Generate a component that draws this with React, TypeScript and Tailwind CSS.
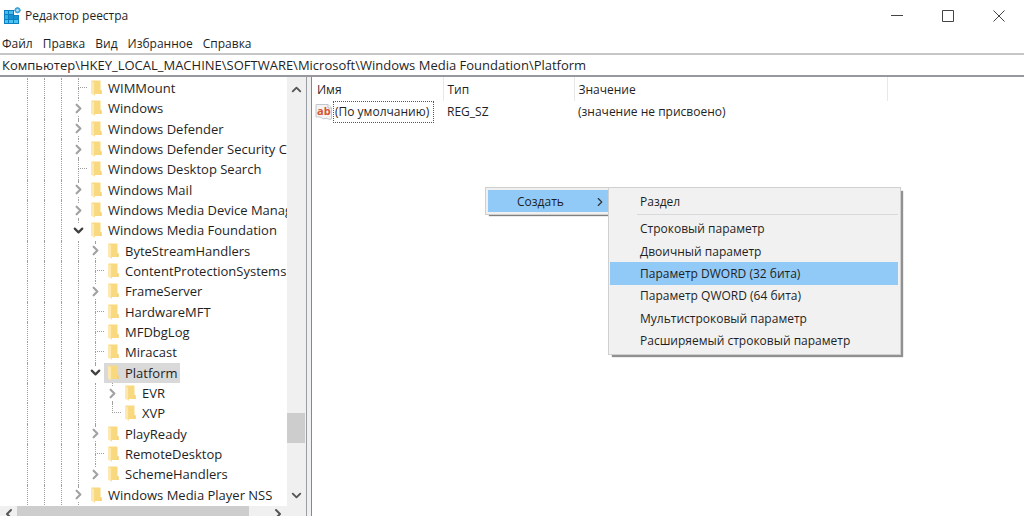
import { ChevronDown, ChevronLeft, ChevronRight, ChevronUp } from 'lucide-react'
import clsx from 'clsx'

type Node = {
  name: string
  level: 0 | 1 | 2
  state?: 'open' | 'closed'
  last?: boolean
  selected?: boolean
}

const TREE: Node[] = [
  { name: 'WIMMount', level: 0 },
  { name: 'Windows', level: 0, state: 'closed' },
  { name: 'Windows Defender', level: 0, state: 'closed' },
  { name: 'Windows Defender Security Center', level: 0, state: 'closed' },
  { name: 'Windows Desktop Search', level: 0 },
  { name: 'Windows Mail', level: 0, state: 'closed' },
  { name: 'Windows Media Device Manager', level: 0, state: 'closed' },
  { name: 'Windows Media Foundation', level: 0, state: 'open' },
  { name: 'ByteStreamHandlers', level: 1, state: 'closed' },
  { name: 'ContentProtectionSystems', level: 1 },
  { name: 'FrameServer', level: 1, state: 'closed' },
  { name: 'HardwareMFT', level: 1 },
  { name: 'MFDbgLog', level: 1 },
  { name: 'Miracast', level: 1 },
  { name: 'Platform', level: 1, state: 'open', selected: true },
  { name: 'EVR', level: 2, state: 'closed' },
  { name: 'XVP', level: 2, last: true },
  { name: 'PlayReady', level: 1, state: 'closed' },
  { name: 'RemoteDesktop', level: 1 },
  { name: 'SchemeHandlers', level: 1, state: 'closed', last: true },
  { name: 'Windows Media Player NSS', level: 0, state: 'closed' },
]

const MENU = ['Файл', 'Правка', 'Вид', 'Избранное', 'Справка']

const NEW_ITEMS = [
  'Строковый параметр',
  'Двоичный параметр',
  'Параметр DWORD (32 бита)',
  'Параметр QWORD (64 бита)',
  'Мультистроковый параметр',
  'Расширяемый строковый параметр',
]

function RegeditIcon() {
  return (
    <svg viewBox="0 0 18 18" className="size-[18px]" aria-hidden="true">
      <path d="M1 3h10v5h5v9H1z" fill="#0b7fc0" />
      <path d="M2 4h3v3H2zM6 4h4v3H6z" fill="#46bdea" />
      <path d="M2 8h3v4H2z" fill="#35b0e4" />
      <path d="M6 8h4v4H6zM11 9h4v3h-4z" fill="#1592d2" />
      <path d="M2 13h3v3H2zM6 13h4v3H6zM11 13h4v3h-4z" fill="#4cc3f0" />
      <path d="M14.500 0l2.300 1 1 2.200-1 2.300-2.300 1-2.300-1-1-2.300 1-2.200z" fill="#3fa3dc" />
      <circle cx="14.500" cy="3.200" r="1.300" fill="#b9e2f7" />
    </svg>
  )
}

function FolderIcon() {
  return (
    <svg viewBox="0 0 11 16" className="h-4 w-[11px] shrink-0" aria-hidden="true">
      <path d="M.5.5h9V10l1 .5V14h-10z" fill="#f9d97f" />
      <path d="M9.500 10l1 .5V14h-1z" fill="#f5cc68" />
      <path d="M0 .8l3.500 1.700v13L0 13.800z" fill="#fde9ae" />
      <path d="M3.500 2.500v13" stroke="#f7d47c" strokeWidth=".6" />
    </svg>
  )
}

function StringIcon() {
  return (
    <svg viewBox="0 0 18 18" className="size-[18px] shrink-0" aria-hidden="true">
      <path
        d="M1 1.500h12l3.500 3.500v11c-2 1.500-4-1.500-6.500-.5s-3-1-5-1.500-3 .5-4 0z"
        fill="#f4f4f4"
        stroke="#c3c6ca"
      />
      <path d="M13 1.500V5h3.500" fill="#fff" stroke="#b9bcc0" />
      <text
        x="2"
        y="12"
        fontSize="11"
        fontWeight="700"
        fill="#d8532c"
        fontFamily="'Open Sans', sans-serif"
      >
        ab
      </text>
    </svg>
  )
}

function TreeRow({ node }: { node: Node }) {
  const guides = Array.from({ length: 3 + node.level })
  return (
    <li className="flex min-h-5 flex-1 items-stretch">
      {guides.map((_, i) => (
        <span key={i} className="flex w-[17px] shrink-0 justify-center">
          <span className="border-l border-dotted border-[#a0a0a0]" />
        </span>
      ))}
      <span className="flex w-[17px] shrink-0 flex-col items-center">
        {node.state ? (
          <>
            <span className="h-[3px] border-l border-dotted border-[#a0a0a0]" />
            <button
              aria-label={node.name}
              aria-expanded={node.state === 'open'}
              className="flex flex-1 items-center"
            >
              {node.state === 'open' ? (
                <ChevronDown size={15} strokeWidth={3.5} className="text-[#404040]" />
              ) : (
                <ChevronRight size={15} strokeWidth={3.5} className="text-[#a2a2a2]" />
              )}
            </button>
            {/* the last child of a branch leaves no line under it */}
            <span
              className={clsx(
                'h-[3px] border-dotted border-[#a0a0a0]',
                !node.last && node.state === 'closed' && 'border-l',
              )}
            />
          </>
        ) : (
          <>
            <span className="flex w-full flex-1 justify-end">
              <span className="w-[9px] border-b border-l border-dotted border-[#a0a0a0]" />
            </span>
            <span className="flex w-full flex-1 justify-end">
              <span
                className={clsx('w-[9px] border-dotted border-[#a0a0a0]', !node.last && 'border-l')}
              />
            </span>
          </>
        )}
      </span>
      <span
        className={clsx(
          'flex items-center gap-1.5 pl-1 pr-[2px] whitespace-nowrap',
          node.selected && 'bg-[#d9d9d9]',
        )}
      >
        <FolderIcon />
        {node.name}
      </span>
    </li>
  )
}

function TreePane() {
  return (
    <aside className="flex w-[307px] shrink-0 flex-col overflow-hidden border-r border-[#9a9da3] text-[13px]">
      <div className="flex min-h-0 flex-1">
        <ul className="flex min-w-0 flex-1 flex-col overflow-hidden py-px pl-[19px]">
          {TREE.map((node) => (
            <TreeRow key={node.name} node={node} />
          ))}
        </ul>
        <div className="flex w-[19px] flex-col items-center bg-[#f0f0f0] pr-px">
          <button aria-label="Вверх" className="flex h-6 items-center">
            <ChevronUp size={15} strokeWidth={3} className="text-[#555]" />
          </button>
          <div className="flex-[312]" />
          <div className="w-full flex-[30] bg-[#cdcdcd]" />
          <div className="flex-[41]" />
          <button aria-label="Вниз" className="flex h-[22px] items-center">
            <ChevronDown size={15} strokeWidth={3} className="text-[#555]" />
          </button>
        </div>
      </div>
      <div className="flex h-[10px] items-start overflow-hidden bg-[#f0f0f0]">
        <button aria-label="Влево" className="flex w-[17px] justify-center">
          <ChevronLeft size={16} strokeWidth={3} className="text-[#555]" />
        </button>
        <div className="h-full w-[232px] bg-[#cdcdcd]" />
        <div className="flex-1" />
        <button aria-label="Вправо" className="mr-5 flex w-[17px] justify-center">
          <ChevronRight size={16} strokeWidth={3} className="text-[#555]" />
        </button>
      </div>
    </aside>
  )
}

function ContextMenu() {
  return (
    <div className="absolute top-[110px] left-[173px] flex items-start">
      <div className="w-[123px] border border-r-0 border-[#d0d0d0] bg-[#f0f0f0] p-[2px] pr-0 shadow-[3px_2px_1px_-1px_#808080]">
        <button className="flex h-[22px] w-full items-center justify-between bg-[#91c9f7] pt-px pr-px pl-[29px]">
          Создать
          <ChevronRight size={14} strokeWidth={2} className="text-[#333]" />
        </button>
      </div>
      <div
        role="menu"
        className="relative flex h-[168px] w-[293px] flex-col border border-[#d0d0d0] bg-[#f1f1f1] py-[2px] pr-[2px] pl-px shadow-[3px_3px_1px_-1px_#909090]"
      >
        <button role="menuitem" className="flex flex-1 items-center pt-px pl-[30px]">
          Раздел
        </button>
        <div className="flex h-[5px] items-center pl-[27px]">
          <hr className="flex-1 border-[#d9d9d9]" />
        </div>
        {NEW_ITEMS.map((item, i) => (
          <button
            key={item}
            role="menuitem"
            className={clsx('flex flex-1 items-center pt-px pl-[30px]', i === 2 && 'bg-[#91c9f7]')}
          >
            {item}
          </button>
        ))}
      </div>
    </div>
  )
}

export default function App() {
  return (
    <div className="flex h-screen flex-col overflow-hidden bg-white font-['Open_Sans','Noto_Sans',sans-serif] text-[12px] leading-5 text-[#1f1f1f]">
      {/* Title bar */}
      <header className="flex h-8 shrink-0 items-center gap-1 pl-[3px]">
        <RegeditIcon />
        <h1 className="flex-1">Редактор реестра</h1>
        <div className="flex text-[#444]">
          <button aria-label="Свернуть" className="flex w-[51px] justify-center">
            <svg viewBox="0 0 12 12" className="size-3" stroke="currentColor">
              <path d="M0 5.500h12" />
            </svg>
          </button>
          <button aria-label="Развернуть" className="flex w-[51px] justify-center">
            <svg viewBox="0 0 12 12" className="size-3" fill="none" stroke="currentColor">
              <path d="M.5.5h11v11H.5z" />
            </svg>
          </button>
          <button aria-label="Закрыть" className="flex w-[51px] justify-center">
            <svg viewBox="0 0 12 12" className="size-3" stroke="currentColor">
              <path d="M.5.5l11 11M11.500.5l-11 11" />
            </svg>
          </button>
        </div>
      </header>

      <nav className="flex h-[21px] shrink-0 items-center gap-[10px] pt-[3px] pl-[2px]">
        {MENU.map((label) => (
          <button key={label}>{label}</button>
        ))}
      </nav>

      <input
        aria-label="Адрес"
        readOnly
        className="h-6 w-full shrink-0 border-y-2 border-t-[#c6c6c6] border-b-[#96989e] px-[2px] text-[13px] outline-none"
        value="Компьютер\HKEY_LOCAL_MACHINE\SOFTWARE\Microsoft\Windows Media Foundation\Platform"
      />

      <div className="flex min-h-0 flex-1">
        <TreePane />
        <div className="w-1 shrink-0 bg-[#f0f0f0]" />
        <main className="relative min-w-0 flex-1 border-l border-[#85888e]">
          <table className="w-full table-fixed text-left">
            <thead>
              <tr className="h-6">
                <th className="w-[131px] border-r border-[#e8e8e8] pt-[2px] pl-[5px] font-normal">Имя</th>
                <th className="w-[131px] border-r border-[#e8e8e8] pt-[2px] pl-1 font-normal">Тип</th>
                <th className="w-[313px] border-r border-[#e8e8e8] pt-[2px] pl-1 font-normal">Значение</th>
                <td />
              </tr>
            </thead>
            <tbody>
              <tr>
                <td className="pl-[3px]">
                  <span className="flex items-center whitespace-nowrap">
                    <StringIcon />
                    <span className="border border-dotted border-[#555] pr-1 pl-px">(По умолчанию)</span>
                  </span>
                </td>
                <td className="pl-1">REG_SZ</td>
                <td className="pl-1">(значение не присвоено)</td>
                <td />
              </tr>
            </tbody>
          </table>
          <ContextMenu />
        </main>
      </div>
    </div>
  )
}
